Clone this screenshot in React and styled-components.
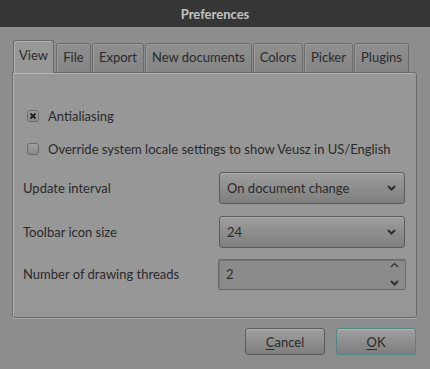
import React from 'react';
import styled, { createGlobalStyle } from 'styled-components';

const GlobalStyle = createGlobalStyle`
  html, body {
    margin: 0;
    padding: 0;
    background: #8d8d8d;
  }
  body {
    font-family: Lato, "Open Sans", sans-serif;
    font-size: 13px;
    color: #2a2a2a;
  }
`;

// tab labels and their widths as Qt lays them out
const tabs = [
  { label: 'View', w: 41 },
  { label: 'File', w: 35 },
  { label: 'Export', w: 52 },
  { label: 'New documents', w: 107 },
  { label: 'Colors', w: 50 },
  { label: 'Picker', w: 49 },
  { label: 'Plugins', w: 55 },
];

const Window = styled.div`
  width: 430px;
  height: 369px;
  display: flex;
  flex-direction: column;
  background: #8d8d8d;
`;

const TitleBar = styled.div`
  height: 27px;
  background: #363636;
  color: #c2c2c2;
  font-weight: bold;
  font-size: 13px;
  display: flex;
  align-items: center;
  justify-content: center;
`;

const Body = styled.div`
  padding: 13px 13px 0 12px;
  display: flex;
  flex-direction: column;
`;

const TabBar = styled.div`
  display: flex;
  align-items: flex-end;
  height: 33px;
  padding-left: 1px;
  gap: 1px;
  position: relative;
  z-index: 1;
  margin-bottom: -1px;
`;

const Tab = styled.div`
  width: ${p => p.$w}px;
  height: ${p => (p.$active ? '33px' : '30px')};
  display: flex;
  align-items: center;
  justify-content: center;
  box-sizing: border-box;
  padding-bottom: ${p => (p.$active ? '4px' : '2px')};
  border: 1px solid #6b6b6b;
  border-bottom: ${p => (p.$active ? 'none' : '1px solid #6b6b6b')};
  border-radius: 3px 3px 0 0;
  background: ${p => (p.$active ? '#979797' : 'linear-gradient(#8f8f8f, #858585)')};
  box-shadow: inset 1px 1px 0 ${p => (p.$active ? '#b4b4b4' : '#9c9c9c')};
  color: #2a2a2a;
  white-space: nowrap;
  margin-right: ${p => (p.$active ? '1px' : '0')};
`;

const Panel = styled.div`
  height: 246px;
  box-sizing: border-box;
  border: 1px solid #6b6b6b;
  border-radius: 0 3px 3px 3px;
  background: #979797;
  box-shadow: inset 1px 1px 0 #b4b4b4, 0 1px 0 #a8a8a8;
  padding: 33px 11px 0 10px;
  display: flex;
  flex-direction: column;
`;

const CheckRow = styled.label`
  display: flex;
  align-items: center;
  gap: 9px;
  height: 20px;
  margin-left: 4px;
  margin-bottom: ${p => p.$gap || 0}px;
`;

const Box = styled.span`
  width: 12px;
  height: 12px;
  box-sizing: border-box;
  border: 1px solid #6a6a6a;
  border-radius: 3px;
  background: linear-gradient(#a0a0a0, #8a8a8a);
  display: flex;
  align-items: center;
  justify-content: center;
`;

const FormRow = styled.div`
  display: flex;
  align-items: center;
  justify-content: space-between;
  height: 32px;
  margin-top: ${p => p.$top || 0}px;
`;

const Combo = styled.div`
  width: 186px;
  height: 32px;
  box-sizing: border-box;
  border: 1px solid #5b5b5b;
  border-radius: 3px;
  background: linear-gradient(#9d9d9d, #7f7f7f);
  box-shadow: inset 0 1px 0 #adadad;
  display: flex;
  align-items: center;
  justify-content: space-between;
  padding: 0 8px 0 7px;
`;

const Spin = styled.div`
  width: 188px;
  height: 31px;
  box-sizing: border-box;
  border: 1px solid #6a6a6a;
  border-radius: 2px;
  background: #8b8b8b;
  box-shadow: inset 1px 1px 0 #777;
  display: flex;
  align-items: center;
  justify-content: space-between;
  padding: 0 6px 0 7px;
  margin-right: -1px;
`;

const Arrows = styled.div`
  display: flex;
  flex-direction: column;
  justify-content: space-between;
  height: 24px;
`;

const Footer = styled.div`
  display: flex;
  justify-content: flex-end;
  gap: 11px;
  padding: 10px 0 0 0;
  margin-right: 1px;
`;

const Button = styled.div`
  width: 80px;
  height: 27px;
  box-sizing: border-box;
  border: 1px solid ${p => (p.$default ? '#4f8784' : '#5b5b5b')};
  border-radius: 3px;
  background: linear-gradient(#9f9f9f, #7e7e7e);
  box-shadow: inset 0 1px 0 #b0b0b0;
  display: flex;
  align-items: center;
  justify-content: center;
  u {
    text-decoration: underline;
    text-underline-offset: 2px;
  }
`;

const Chevron = ({ up }) => (
  <svg width="9" height="6" viewBox="0 0 9 6">
    <path
      d={up ? 'M1 5 L4.5 1.5 L8 5' : 'M1 1 L4.5 4.5 L8 1'}
      fill="none"
      stroke="#2f2f2f"
      strokeWidth={up ? 1.2 : 2}
    />
  </svg>
);

export default function App() {
  return (
    <>
      <GlobalStyle />
      <Window>
        <TitleBar>Preferences</TitleBar>
        <Body>
          <TabBar>
            {tabs.map((t, i) => (
              <Tab key={t.label} $w={t.w} $active={i === 0}>{t.label}</Tab>
            ))}
          </TabBar>
          <Panel>
            <CheckRow $gap={13}>
              <Box>
                <svg width="8" height="8" viewBox="0 0 8 8">
                  <path d="M1.5 1.5 L6.5 6.5 M6.5 1.5 L1.5 6.5" stroke="#222" strokeWidth="2" />
                </svg>
              </Box>
              Antialiasing
            </CheckRow>
            <CheckRow>
              <Box />
              Override system locale settings to show Veusz in US/English
            </CheckRow>
            <FormRow $top={13}>
              <span>Update interval</span>
              <Combo>
                <span>On document change</span>
                <Chevron />
              </Combo>
            </FormRow>
            <FormRow $top={12}>
              <span>Toolbar icon size</span>
              <Combo>
                <span>24</span>
                <Chevron />
              </Combo>
            </FormRow>
            <FormRow $top={10}>
              <span>Number of drawing threads</span>
              <Spin>
                <span>2</span>
                <Arrows>
                  <Chevron up />
                  <Chevron />
                </Arrows>
              </Spin>
            </FormRow>
          </Panel>
          <Footer>
            <Button><span><u>C</u>ancel</span></Button>
            <Button $default><span><u>O</u>K</span></Button>
          </Footer>
        </Body>
      </Window>
    </>
  );
}
